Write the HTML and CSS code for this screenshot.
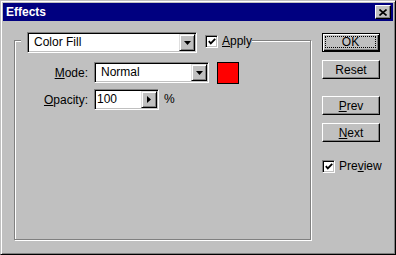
FILE: index.html
```html
<!DOCTYPE html>
<html lang="en">
<head>
  <meta charset="UTF-8" />
  <title>Effects</title>
  <link rel="stylesheet" href="styles.css">
</head>
<body>
  <div class="window">
    <div class="titlebar">
      <span class="title">Effects</span>
      <button class="close" title="Close">
        <svg width="8" height="7" viewBox="0 0 8 7"><path d="M0.5 0.5L7.5 6.5M7.5 0.5L0.5 6.5" stroke="#000" stroke-width="1.6"/></svg>
      </button>
    </div>

    <div class="content">
      <div class="group">
        <div class="group-head">
          <div class="combo combo-effect">
            <span class="combo-text">Color Fill</span>
            <span class="drop-btn"><svg width="7" height="4" viewBox="0 0 7 4"><polygon points="0,0 7,0 3.5,4" fill="#000"/></svg></span>
          </div>
          <label class="check check-apply">
            <span class="box"><svg width="8" height="7" viewBox="0 0 8 7"><path d="M0.8 3.2L2.8 5.4L7.2 0.8" stroke="#000" stroke-width="1.8" fill="none"/></svg></span>
            <span class="check-text"><u>A</u>pply</span>
          </label>
        </div>

        <div class="fields">
          <span class="field-label"><u>M</u>ode:</span>
          <div class="field-row">
            <div class="combo combo-mode">
              <span class="combo-text">Normal</span>
              <span class="drop-btn"><svg width="7" height="4" viewBox="0 0 7 4"><polygon points="0,0 7,0 3.5,4" fill="#000"/></svg></span>
            </div>
            <span class="swatch"></span>
          </div>

          <span class="field-label"><u>O</u>pacity:</span>
          <div class="field-row">
            <div class="combo spin">
              <span class="spin-text">100</span>
              <span class="drop-btn"><svg width="4" height="7" viewBox="0 0 4 7"><polygon points="0,0 4,3.5 0,7" fill="#000"/></svg></span>
            </div>
            <span class="unit">%</span>
          </div>
        </div>
      </div>

      <div class="actions">
        <button class="btn btn-default"><span class="focus">OK</span></button>
        <button class="btn">Reset</button>
        <button class="btn btn-gap"><u>P</u>rev</button>
        <button class="btn"><u>N</u>ext</button>
        <label class="check check-preview">
          <span class="box"><svg width="8" height="7" viewBox="0 0 8 7"><path d="M0.8 3.2L2.8 5.4L7.2 0.8" stroke="#000" stroke-width="1.8" fill="none"/></svg></span>
          <span class="check-text">Pre<u>v</u>iew</span>
        </label>
      </div>
    </div>
  </div>
</body>
</html>
```

FILE: styles.css
```css
* {
  box-sizing: border-box;
}

body {
  margin: 0;
  font-family: "Liberation Sans", Arial, sans-serif;
  font-size: 12px;
  color: #000;
  background: #c0c0c0;
}

.window {
  width: 396px;
  height: 255px;
  padding: 2px;
  background: #c0c0c0;
  border: 1px solid;
  border-color: #c0c0c0 #000 #000 #c0c0c0;
  box-shadow: inset 1px 1px #fff, inset -1px -1px #808080;
}

.titlebar {
  height: 18px;
  display: flex;
  align-items: center;
  justify-content: space-between;
  padding: 0 2px 0 3px;
  background: #000080;
  color: #fff;
  font-weight: bold;
}

.close {
  width: 16px;
  height: 14px;
  padding: 0;
  display: flex;
  align-items: center;
  justify-content: center;
  background: #c0c0c0;
  border: 1px solid;
  border-color: #fff #000 #000 #fff;
  box-shadow: inset -1px -1px #808080;
}

.content {
  display: flex;
  align-items: flex-start;
  padding: 12px 0 0 11px;
}

/* etched group box */
.group {
  width: 297px;
  height: 200px;
  margin-top: 7px;
  border: 1px solid #808080;
  box-shadow: 1px 1px 0 #fff, inset 1px 1px 0 #fff;
}

.group-head {
  display: flex;
  align-items: flex-start;
  width: fit-content;
  margin: -9px 0 0 6px;
  padding: 0 0 0 6px;
  background: #c0c0c0;
}

/* sunken white field */
.combo {
  display: flex;
  align-items: stretch;
  height: 21px;
  padding: 1px;
  background: #fff;
  border: 1px solid;
  border-color: #808080 #fff #fff #808080;
  box-shadow: inset 1px 1px #000, inset -1px -1px #c0c0c0;
}

.combo-effect {
  width: 170px;
}

.combo-mode {
  width: 115px;
}

.combo-text {
  flex: 1;
  padding-left: 5px;
  line-height: 17px;
}

.drop-btn {
  width: 16px;
  display: flex;
  align-items: center;
  justify-content: center;
  background: #c0c0c0;
  border: 1px solid;
  border-color: #dfdfdf #000 #000 #dfdfdf;
  box-shadow: inset 1px 1px #fff, inset -1px -1px #808080;
}

.check {
  display: flex;
  align-items: flex-start;
}

.box {
  width: 13px;
  height: 13px;
  display: flex;
  align-items: center;
  justify-content: center;
  background: #fff;
  border: 1px solid;
  border-color: #808080 #fff #fff #808080;
  box-shadow: inset 1px 1px #000, inset -1px -1px #c0c0c0;
}

.check-text {
  margin: -1px 0 0 4px;
  line-height: 14px;
}

.check-apply {
  margin: 3px 0 0 8px;
}

.fields {
  display: grid;
  grid-template-columns: 73px auto;
  column-gap: 6px;
  row-gap: 5px;
  align-items: center;
  margin-top: 9px;
}

.field-label {
  justify-self: end;
}

.field-row {
  display: flex;
  align-items: flex-start;
}

.swatch {
  width: 22px;
  height: 22px;
  margin-left: 8px;
  background: #f00;
  border: 1px solid #000;
}

.spin {
  width: 65px;
}

.spin-text {
  flex: 1;
  padding-left: 1px;
  line-height: 17px;
}

.unit {
  margin: 3px 0 0 5px;
}

.actions {
  display: flex;
  flex-direction: column;
  align-items: flex-start;
  margin-left: 11px;
}

.btn {
  width: 58px;
  height: 19px;
  margin-bottom: 8px;
  padding: 0;
  font: inherit;
  color: #000;
  background: #c0c0c0;
  border: 1px solid;
  border-color: #fff #000 #000 #fff;
  box-shadow: inset -1px -1px #808080;
}

.btn-default {
  display: flex;
  padding: 2px 3px 3px 2px;
  border-color: #000;
  box-shadow: inset 1px 1px #fff, inset -1px -1px #000, inset -2px -2px #808080;
}

.focus {
  flex: 1;
  line-height: 11px;
  border: 1px dotted #000;
}

.btn-gap {
  margin-top: 9px;
}

.check-preview {
  margin-top: 10px;
}

.check-preview .check-text {
  margin-left: 4px;
}
```
